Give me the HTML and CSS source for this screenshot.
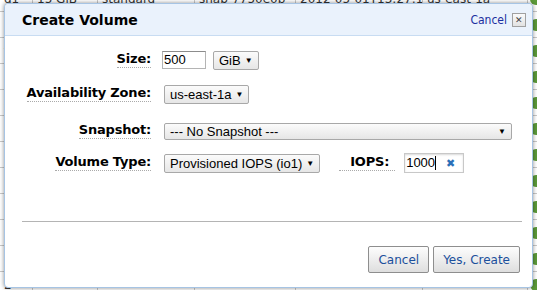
FILE: index.html
```html
<!DOCTYPE html>
<html lang="en">
<head>
    <meta charset="UTF-8">
    <title>Create Volume</title>
    <link rel="stylesheet" href="styles.css">
</head>
<body>
<table class="grid">
    <tr><td>d1</td><td>15 GiB</td><td>standard</td><td>snap-7750e0b</td><td>2012-05-01T13:27:15</td><td>us-east-1a</td><td><i class="dot"></i></td></tr>
    <tr><td>e</td><td></td><td></td><td></td><td></td><td></td><td><i class="dot"></i></td></tr>
    <tr><td>f</td><td></td><td></td><td></td><td></td><td></td><td><i class="dot"></i></td></tr>
    <tr><td>3</td><td></td><td></td><td></td><td></td><td></td><td><i class="dot"></i></td></tr>
    <tr><td>4</td><td></td><td></td><td></td><td></td><td></td><td><i class="dot"></i></td></tr>
    <tr><td>9</td><td></td><td></td><td></td><td></td><td></td><td><i class="dot"></i></td></tr>
    <tr><td>a</td><td></td><td></td><td></td><td></td><td></td><td><i class="dot"></i></td></tr>
    <tr><td>7</td><td></td><td></td><td></td><td></td><td></td><td><i class="dot"></i></td></tr>
    <tr><td>0</td><td></td><td></td><td></td><td></td><td></td><td><i class="dot"></i></td></tr>
    <tr><td>d</td><td></td><td></td><td></td><td></td><td></td><td><i class="dot"></i></td></tr>
    <tr><td>1</td><td></td><td></td><td></td><td></td><td></td><td><i class="dot"></i></td></tr>
    <tr><td>2</td><td></td><td></td><td></td><td></td><td></td><td><i class="dot"></i></td></tr>
</table>

<div class="dialog">
    <div class="dialog-head">
        <h1>Create Volume</h1>
        <a class="head-cancel">Cancel</a>
        <span class="close">&#x2715;</span>
    </div>
    <div class="dialog-body">
        <div class="row">
            <span class="label"><span>Size:</span></span>
            <span class="textbox size-box">500</span>
            <span class="select">GiB <b>&#9660;</b></span>
        </div>
        <div class="row">
            <span class="label"><span>Availability Zone:</span></span>
            <span class="select az">us-east-1a <b>&#9660;</b></span>
        </div>
        <div class="row row-snap">
            <span class="label"><span>Snapshot:</span></span>
            <span class="select wide">--- No Snapshot --- <b>&#9660;</b></span>
        </div>
        <div class="row">
            <span class="label"><span>Volume Type:</span></span>
            <span class="select">Provisioned IOPS (io1) <b>&#9660;</b></span>
            <span class="label iops"><span>IOPS:</span></span>
            <span class="textbox iops-box">1000<i class="caret"></i><em>&#x2716;</em></span>
        </div>
        <hr class="divider">
        <div class="actions">
            <button class="btn">Cancel</button>
            <button class="btn">Yes, Create</button>
        </div>
    </div>
</div>
</body>
</html>
```

FILE: styles.css
```css
body {
    margin: 0;
    width: 537px;
    height: 290px;
    overflow: hidden;
    background: #ffffff;
    font-family: "Liberation Sans", Arial, sans-serif;
    position: relative;
}
.grid {
    border-collapse: collapse;
    table-layout: fixed;
    margin-top: -14px;
    width: 537px;
    font-family: "DejaVu Sans", Verdana, sans-serif;
    font-size: 12px;
    color: #333;
}
.grid td {
    height: 25px;
    padding: 0 4px;
    border-bottom: 1px solid #c8c8c8;
    border-right: 1px solid #c8c8c8;
    white-space: nowrap;
    overflow: hidden;
}
.grid td:first-child { width: 24px; }
.grid td:nth-child(2) { width: 56px; }
.grid td:nth-child(3) { width: 88px; }
.grid td:nth-child(4) { width: 92px; }
.grid td:nth-child(5) { width: 118px; }
.grid td:nth-child(6) { width: 96px; }
.grid td:nth-child(7) {
    padding: 0 0 0 2px;
    border-right: 0;
}
.dot {
    display: inline-block;
    width: 12px;
    height: 12px;
    border-radius: 50%;
    background: #5c9a3a;
    vertical-align: middle;
}
.dialog {
    position: absolute;
    left: 4px;
    top: 3px;
    width: 527px;
    height: 283px;
    background: #fff;
    border: 1px solid #a6c4e4;
    border-radius: 4px;
    box-shadow: 0 0 4px rgba(0, 0, 0, 0.45);
    display: flex;
    flex-direction: column;
}
.dialog-head {
    height: 31px;
    background: #eaf2fc;
    border-bottom: 1px solid #c8dcf2;
    border-radius: 4px 4px 0 0;
    display: flex;
    align-items: center;
    padding: 0 6px 0 17px;
}
.dialog-head h1 {
    margin: 0;
    flex: 1;
    font-family: "DejaVu Sans", Verdana, sans-serif;
    font-size: 14px;
    font-weight: bold;
    color: #000;
}
.head-cancel {
    font-family: "DejaVu Sans Condensed", "DejaVu Sans", sans-serif;
    font-size: 12px;
    color: #1a2fa0;
    margin-right: 5px;
}
.close {
    width: 12px;
    height: 12px;
    border: 1px solid #a0a0a0;
    background: linear-gradient(#fafafa, #e2e2e2);
    font-size: 9px;
    line-height: 12px;
    text-align: center;
    color: #444;
}
.dialog-body {
    padding: 14px 10px 0 17px;
    display: flex;
    flex-direction: column;
}
.row {
    display: flex;
    align-items: center;
    height: 20px;
    margin-bottom: 14px;
}
.row-snap {
    margin-top: 3px;
    margin-bottom: 12px;
}
.label {
    width: 129px;
    text-align: right;
    margin-right: 11px;
    font-family: "DejaVu Sans", Verdana, sans-serif;
    font-size: 13px;
    font-weight: bold;
    letter-spacing: -0.2px;
    color: #000;
    padding-bottom: 3px;
}
.label span {
    border-bottom: 1px dotted #aaa;
    padding-bottom: 1px;
}
.textbox {
    box-sizing: border-box;
    height: 18px;
    border: 1px solid #b4b4b4;
    border-top-color: #8c8c8c;
    font-size: 13px;
    line-height: 16px;
    padding-left: 1px;
    color: #000;
    background: #fff;
}
.size-box {
    width: 44px;
    margin-right: 7px;
}
.select {
    box-sizing: border-box;
    height: 19px;
    border: 1px solid #a8a8a8;
    border-radius: 2px;
    background: linear-gradient(#fbfbfb, #e6e6e6);
    font-size: 13px;
    line-height: 17px;
    padding: 0 5px;
    color: #000;
    white-space: nowrap;
    display: flex;
    align-items: center;
}
.select b {
    font-size: 8px;
    margin-left: 4px;
}
.az { margin-left: 2px; }
.wide {
    width: 348px;
    justify-content: space-between;
    margin-left: 2px;
    height: 17px;
}
.row:nth-child(4) .select { margin-left: 2px; }
.label.iops {
    width: 57px;
    margin-left: 18px;
    margin-right: 9px;
}
.label.iops span {
    padding-left: 11px;
    padding-right: 6px;
}
.iops-box {
    width: 60px;
    height: 20px;
    box-shadow: inset 0 1px 2px rgba(0, 0, 0, 0.15);
    display: flex;
    align-items: center;
    border-color: #c8c8c8;
}
.caret {
    width: 1px;
    height: 14px;
    background: #000;
}
.iops-box em {
    font-style: normal;
    font-size: 11px;
    color: #2c6fb8;
    margin-left: 10px;
}
.divider {
    border: 0;
    border-top: 1px solid #b4b4b4;
    margin: 34px 0 0 0;
    width: 500px;
}
.actions {
    display: flex;
    justify-content: flex-end;
    gap: 4px;
    margin-top: 24px;
    padding-right: 2px;
}
.btn {
    height: 27px;
    padding: 0 9px;
    border: 1px solid #8e8e8e;
    border-radius: 2px;
    background: linear-gradient(#fdfdfd, #dedede);
    font-family: "DejaVu Sans", Verdana, sans-serif;
    font-size: 12px;
    color: #1b4f9c;
}
```
